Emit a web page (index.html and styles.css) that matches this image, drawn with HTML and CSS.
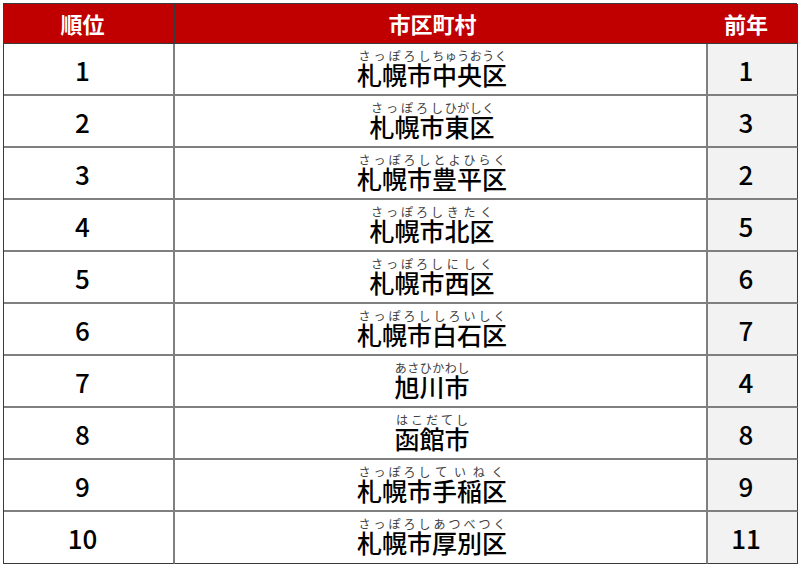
FILE: index.html
```html
<!DOCTYPE html>
<html lang="ja">
<head>
<meta charset="utf-8">
<link rel="stylesheet" href="styles.css">
</head>
<body>
<div class="rank">
  <div class="hd c1">順位</div><div class="hd c2">市区町村</div><div class="hd c3">前年</div>

  <div class="cell num">1</div>
  <div class="cell name">
    <span class="w"><span class="rt"><i>さ</i><i>っ</i><i>ぽ</i><i>ろ</i><i>し</i></span><span class="rb">札幌市</span></span><span class="w"><span class="rt"><i>ち</i><i>ゅ</i><i>う</i><i>お</i><i>う</i><i>く</i></span><span class="rb">中央区</span></span>
  </div>
  <div class="cell prev">1</div>

  <div class="cell num">2</div>
  <div class="cell name">
    <span class="w"><span class="rt"><i>さ</i><i>っ</i><i>ぽ</i><i>ろ</i><i>し</i></span><span class="rb">札幌市</span></span><span class="w"><span class="rt"><i>ひ</i><i>が</i><i>し</i><i>く</i></span><span class="rb">東区</span></span>
  </div>
  <div class="cell prev">3</div>

  <div class="cell num">3</div>
  <div class="cell name">
    <span class="w"><span class="rt"><i>さ</i><i>っ</i><i>ぽ</i><i>ろ</i><i>し</i></span><span class="rb">札幌市</span></span><span class="w"><span class="rt"><i>と</i><i>よ</i><i>ひ</i><i>ら</i><i>く</i></span><span class="rb">豊平区</span></span>
  </div>
  <div class="cell prev">2</div>

  <div class="cell num">4</div>
  <div class="cell name">
    <span class="w"><span class="rt"><i>さ</i><i>っ</i><i>ぽ</i><i>ろ</i><i>し</i></span><span class="rb">札幌市</span></span><span class="w"><span class="rt"><i>き</i><i>た</i><i>く</i></span><span class="rb">北区</span></span>
  </div>
  <div class="cell prev">5</div>

  <div class="cell num">5</div>
  <div class="cell name">
    <span class="w"><span class="rt"><i>さ</i><i>っ</i><i>ぽ</i><i>ろ</i><i>し</i></span><span class="rb">札幌市</span></span><span class="w"><span class="rt"><i>に</i><i>し</i><i>く</i></span><span class="rb">西区</span></span>
  </div>
  <div class="cell prev">6</div>

  <div class="cell num">6</div>
  <div class="cell name">
    <span class="w"><span class="rt"><i>さ</i><i>っ</i><i>ぽ</i><i>ろ</i><i>し</i></span><span class="rb">札幌市</span></span><span class="w"><span class="rt"><i>し</i><i>ろ</i><i>い</i><i>し</i><i>く</i></span><span class="rb">白石区</span></span>
  </div>
  <div class="cell prev">7</div>

  <div class="cell num">7</div>
  <div class="cell name">
    <span class="w"><span class="rt"><i>あ</i><i>さ</i><i>ひ</i><i>か</i><i>わ</i><i>し</i></span><span class="rb">旭川市</span></span>
  </div>
  <div class="cell prev">4</div>

  <div class="cell num">8</div>
  <div class="cell name">
    <span class="w"><span class="rt"><i>は</i><i>こ</i><i>だ</i><i>て</i><i>し</i></span><span class="rb">函館市</span></span>
  </div>
  <div class="cell prev">8</div>

  <div class="cell num">9</div>
  <div class="cell name">
    <span class="w"><span class="rt"><i>さ</i><i>っ</i><i>ぽ</i><i>ろ</i><i>し</i></span><span class="rb">札幌市</span></span><span class="w"><span class="rt"><i>て</i><i>い</i><i>ね</i><i>く</i></span><span class="rb">手稲区</span></span>
  </div>
  <div class="cell prev">9</div>

  <div class="cell num">10</div>
  <div class="cell name">
    <span class="w"><span class="rt"><i>さ</i><i>っ</i><i>ぽ</i><i>ろ</i><i>し</i></span><span class="rb">札幌市</span></span><span class="w"><span class="rt"><i>あ</i><i>つ</i><i>べ</i><i>つ</i><i>く</i></span><span class="rb">厚別区</span></span>
  </div>
  <div class="cell prev">11</div>
</div>
</body>
</html>
```
FILE: styles.css
```css
html, body {
  margin: 0;
  padding: 0;
  background: #ffffff;
}
body {
  padding: 3px 0 0 3px;
  font-family: "Noto Sans CJK JP", "Noto Sans", sans-serif;
}
.rank {
  display: grid;
  grid-template-columns: 171px 533px 90px;
  grid-template-rows: 40px repeat(10, 52px);
  width: 794px;
  border-top: 1px solid #3a3a3a;
  border-left: 1px solid #3a3a3a;
  box-sizing: border-box;
}
.hd {
  background: #c00000;
  color: #ffffff;
  font-weight: bold;
  font-size: 22px;
  line-height: 1;
  display: flex;
  align-items: center;
  justify-content: center;
  border-right: 1px solid #3a3a3a;
  border-bottom: 1px solid #3a3a3a;
  padding-bottom: 1px;
}
.hd.c1, .cell.num { border-right-width: 2px; }
.cell {
  display: flex;
  align-items: center;
  justify-content: center;
  border-right: 2px solid #7f7f7f;
  border-bottom: 2px solid #7f7f7f;
  color: #000000;
  font-size: 26px;
  font-weight: 500;
  line-height: 1;
}
.cell.prev {
  background: #f2f2f2;
  border-right: 1px solid #3a3a3a;
}
.rank > .cell:nth-last-child(-n+3) {
  border-bottom: 1px solid #3a3a3a;
}
.c1, .num { padding-right: 12px; }
.c2, .name { padding-right: 17px; }
.c3, .prev { padding-right: 13px; }
.num, .prev { padding-top: 1px; }
.name {
  align-items: flex-start;
  padding-top: 6px;
}
.w {
  display: inline-flex;
  flex-direction: column;
}
.rt {
  display: flex;
  justify-content: space-around;
  font-size: 12px;
  line-height: 12px;
  height: 12px;
  color: #404040;
  font-weight: normal;
}
.rt i {
  font-style: normal;
}
.rb {
  font-size: 25px;
  line-height: 25px;
  white-space: nowrap;
}
```
